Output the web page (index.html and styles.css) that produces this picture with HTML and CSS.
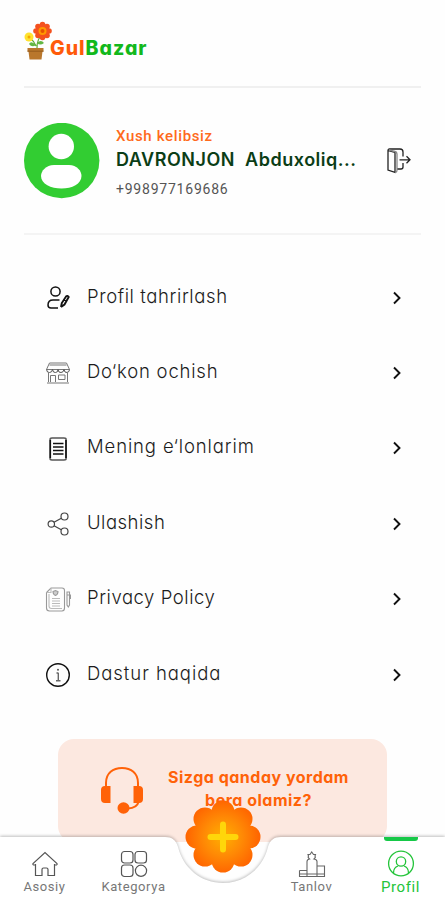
FILE: index.html
```html
<!DOCTYPE html>
<html lang="uz">

<head>
    <meta charset="UTF-8">
    <meta name="viewport" content="width=device-width, initial-scale=1.0">
    <title>GulBazar - Profil</title>
    <link rel="stylesheet" href="styles.css">
</head>

<body>

    <!-- Logo -->
    <header class="header">
        <svg class="logo-icon" width="30" height="40" viewBox="0 0 30 40">
            <path d="M13 27 C13 20 15 17 18 13 M12 25 Q10 20 6 17" fill="none" stroke="#5faa35" stroke-width="1.2" />
            <path d="M13 22 Q17 18 20 22 Q16 25 13 22 M12 24 Q7 19 5 23 Q8 27 12 24" fill="#62b743" />
            <g fill="#f4511e">
                <circle cx="18.500" cy="3.500" r="2.800" /><circle cx="23" cy="5.500" r="2.800" />
                <circle cx="25" cy="10" r="2.800" /><circle cx="23" cy="14.500" r="2.800" />
                <circle cx="18.500" cy="16.500" r="2.800" /><circle cx="14" cy="14.500" r="2.800" />
                <circle cx="12" cy="10" r="2.800" /><circle cx="14" cy="5.500" r="2.800" />
                <circle cx="18.500" cy="10" r="7" />
            </g>
            <circle cx="18.500" cy="10" r="4" fill="#ff9800" />
            <circle cx="18.500" cy="10" r="2" fill="#e65100" />
            <circle cx="5" cy="16" r="4.500" fill="#ffe22e" />
            <circle cx="5" cy="16" r="1.500" fill="#f5a800" />
            <path d="M3.500 27 H19.500 V30.500 H18.500 L17.500 38.500 H5.500 L4.500 30.500 H3.500 Z" fill="#b9772c" />
            <path d="M3.500 30.200 H19.500" stroke="#965a1c" />
        </svg>
        <span class="logo-text"><span class="logo-gul">Gul</span>Bazar</span>
    </header>

    <!-- User -->
    <section class="user">
        <svg class="avatar" width="76" height="76" viewBox="0 0 76 76">
            <circle cx="37.700" cy="37.500" r="37.700" fill="#32cd32" />
            <circle cx="37.300" cy="23.500" r="12.700" fill="#fff" />
            <path d="M30 42 H45 C53 42 57.500 48 57.500 53 C57.500 61 48 65.500 37.500 65.500 C27 65.500 17 61 17 53 C17 48 22 42 30 42 Z" fill="#fff" />
        </svg>
        <div class="user-info">
            <div class="welcome">Xush kelibsiz</div>
            <div class="name">DAVRONJON&nbsp; Abduxoliq...</div>
            <div class="phone">+998977169686</div>
        </div>
        <svg class="logout" width="24" height="26" viewBox="0 0 24 26" fill="none" stroke="#222" stroke-width="1.300">
            <path d="M1 2.500 V22 L8 24.300 V4.500 L1 2.500 Q1 1 2.500 1 H13 Q16 1 16 4 V8.500 M16 15 V19 Q16 21 14 21 H10" />
            <path d="M2 2 L8 3.500 Q10 4 10 6 V22 Q10 24.500 8 24.300" stroke="#888" />
            <path d="M12.500 11.800 H23 M19.500 8.300 L23 11.800 L19.500 15.300" />
        </svg>
    </section>

    <!-- Menu -->
    <main class="menu">
        <a class="menu-item">
            <svg width="26" height="26" viewBox="0 0 26 26" fill="none" stroke="#111" stroke-width="1.500">
                <circle cx="10.500" cy="6.500" r="4.600" />
                <path d="M13 23 H6 Q3 23 3 20 Q3 15 8 15 H14.500" />
                <path d="M16 22 L16.800 18 L21 11.500 Q22.500 10 23.700 12 L19.500 19.500 L16 22 M19.500 14.500 L21.800 16" stroke-width="1.900" />
            </svg>
            <span class="t1">Profil tahrirlash</span>
            <svg class="chevron" width="8" height="14" viewBox="0 0 8 14"><path d="M1 1.500 L6.500 7 L1 12.500" /></svg>
        </a>
        <a class="menu-item">
            <svg width="26" height="26" viewBox="0 0 26 26" fill="none" stroke="#777" stroke-width="1">
                <path d="M4.500 3 H21.500 L24.500 9.500 H1.500 Z M4.500 5 H21.500" />
                <path d="M1.500 9.500 Q2 13 4.500 12.500 Q7 12.500 7.500 9.500 Q8 13 10.500 12.500 Q13 12.500 13 9.500 Q13.500 13 16 12.500 Q18.500 12.500 19 9.500 Q19.500 13 22 12.500 Q24.500 12 24.500 9.500" stroke="#555" />
                <path d="M3.500 13 V22 M22.500 13 V22 M2 23 H24 M5.500 22 V15.500 H10.500 V22 M13.500 15 H20 V19.500 H13.500 Z" />
            </svg>
            <span class="t2">Do‘kon ochish</span>
            <svg class="chevron" width="8" height="14" viewBox="0 0 8 14"><path d="M1 1.500 L6.500 7 L1 12.500" /></svg>
        </a>
        <a class="menu-item">
            <svg width="26" height="26" viewBox="0 0 26 26" fill="none" stroke="#111" stroke-width="1.400">
                <path d="M5.200 4.500 V23.500 M21 4.500 V23.500" stroke-width="1.800" />
                <path d="M5 4.500 Q5 3 7 3 H19 Q21.200 3 21.200 4.500 M5 23.500 Q5 25 7 25 H19 Q21.200 25 21.200 23.500" stroke="#555" />
                <path d="M8 8.500 H18.500 M8 12 H18.500 M8 15.500 H18.500 M8 19 H18.500" />
            </svg>
            <span class="t3">Mening e‘lonlarim</span>
            <svg class="chevron" width="8" height="14" viewBox="0 0 8 14"><path d="M1 1.500 L6.500 7 L1 12.500" /></svg>
        </a>
        <a class="menu-item">
            <svg width="26" height="26" viewBox="0 0 26 26" fill="none" stroke="#444" stroke-width="1.200">
                <circle cx="6.300" cy="13" r="3.200" />
                <circle cx="19.500" cy="5.500" r="3.500" />
                <circle cx="19.500" cy="20.500" r="3.500" />
                <path d="M9 11.300 L16.300 7.200 M9 14.700 L16.300 18.800" />
            </svg>
            <span class="t4">Ulashish</span>
            <svg class="chevron" width="8" height="14" viewBox="0 0 8 14"><path d="M1 1.500 L6.500 7 L1 12.500" /></svg>
        </a>
        <a class="menu-item">
            <svg width="26" height="26" viewBox="0 0 26 26" fill="none" stroke="#999" stroke-width="1.100">
                <path d="M6 2 H17 Q19.500 2 19.500 4.500 V22 Q19.500 25 17 25 H4.500 Q1.500 25 1.500 22 V6.500 Z" />
                <path d="M6 2 V6.500 H1.500 M4 8 V20 Q4 22.500 6.500 22.500 H17" stroke="#bbb" />
                <path d="M8 5.500 L10.500 4.500 L13 5.500 Q13 8.500 10.500 9.500 Q8 8.500 8 5.500 Z" fill="#ccc" />
                <path d="M7 12.500 H15 M7 15 H15 M7 17.500 H15 M7 20 H15" stroke="#bbb" />
                <path d="M22 6 V19 L23.300 21 L24.500 19 V6 Z M22 9 H25.500 V13" />
            </svg>
            <span class="t5">Privacy Policy</span>
            <svg class="chevron" width="8" height="14" viewBox="0 0 8 14"><path d="M1 1.500 L6.500 7 L1 12.500" /></svg>
        </a>
        <a class="menu-item">
            <svg width="26" height="26" viewBox="0 0 26 26" fill="none" stroke="#111" stroke-width="1.400">
                <circle cx="13" cy="13" r="11.300" />
                <path d="M13.300 11 V18.700 M11.500 11 H13.500 M11 18.700 H15.500" stroke="#666" />
                <circle cx="13" cy="7.800" r="1" fill="#555" stroke="none" />
            </svg>
            <span class="t6">Dastur haqida</span>
            <svg class="chevron" width="8" height="14" viewBox="0 0 8 14"><path d="M1 1.500 L6.500 7 L1 12.500" /></svg>
        </a>
    </main>

    <!-- Support card -->
    <section class="support">
        <svg width="44" height="48" viewBox="0 0 44 48" fill="#ff6208">
            <path d="M6 22 V17 C6 7 13 2 22 2 C31 2 38 7 38 17 V22" fill="none" stroke="#ff6208" stroke-width="2" />
            <path d="M10.500 20 V37 H5 Q1 37 1 33 V24 Q1 20 5 20 Z M33.500 20 V37 H39 Q43 37 43 33 V24 Q43 20 39 20 Z" />
            <path d="M38.500 36 Q37 42 28 42.500" fill="none" stroke="#ff6208" stroke-width="2" />
            <ellipse cx="23.500" cy="42" rx="6" ry="5.700" />
        </svg>
        <p class="support-text">Sizga qanday yordam<br>bera olamiz?</p>
    </section>

    <!-- Bottom navigation -->
    <nav class="navbar">
        <svg class="navbar-bg" width="445" height="70" viewBox="0 0 445 70">
            <path d="M-5 7 H165 C172 7 176 10 178 17 C183 38 201 53 223 53 C245 53 263 38 268 17 C270 10 274 7 281 7 H450 V75 H-5 Z" fill="#fff" />
        </svg>
        <a class="nav-item">
            <svg width="28" height="28" viewBox="0 0 28 28" fill="none" stroke="#555" stroke-width="1.200">
                <path d="M4.500 14 V25.500 H11 V19.500 Q11 18 12.500 18 H15.500 Q17 18 17 19.500 V25.500 H23.500 V14 M4.500 15 H2.500 Q1.500 14.500 2 13.500 L14 2.500 L26 13.500 Q26.500 14.500 25.500 15 H23.500" />
            </svg>
            <span>Asosiy</span>
        </a>
        <a class="nav-item">
            <svg width="28" height="28" viewBox="0 0 28 28" fill="none" stroke="#555" stroke-width="1.200">
                <rect x="1.500" y="1.500" width="11.500" height="11.500" rx="3" />
                <rect x="15" y="1.500" width="11.500" height="11.500" rx="3" />
                <rect x="1.500" y="15" width="11.500" height="11.500" rx="3" />
                <circle cx="21" cy="20.800" r="5.600" />
            </svg>
            <span>Kategorya</span>
        </a>
        <a class="nav-add">
            <svg width="78" height="76" viewBox="0 0 78 76">
                <defs>
                    <radialGradient id="petal" gradientUnits="userSpaceOnUse" cx="39" cy="38" r="38">
                        <stop offset="0" stop-color="#ffb000" />
                        <stop offset="0.500" stop-color="#ff8a05" />
                        <stop offset="1" stop-color="#ff6200" />
                    </radialGradient>
                </defs>
                <g fill="url(#petal)">
                    <circle cx="39" cy="38" r="26" />
                    <circle cx="39" cy="13" r="11.500" /><circle cx="57" cy="20" r="11.500" />
                    <circle cx="65" cy="38" r="11.500" /><circle cx="57" cy="56" r="11.500" />
                    <circle cx="39" cy="62" r="11.500" /><circle cx="21" cy="56" r="11.500" />
                    <circle cx="13" cy="38" r="11.500" /><circle cx="21" cy="20" r="11.500" />
                </g>
                <path d="M39 25.500 V50.500 M26.500 38 H51.500" stroke="#ffd60a" stroke-width="6" stroke-linecap="round" />
            </svg>
        </a>
        <a class="nav-item">
            <svg width="28" height="28" viewBox="0 0 28 28" fill="none" stroke="#666" stroke-width="1.100">
                <path d="M1.500 20.500 H9 M1.500 20.500 V26.500 H26.500 V16 H19 M1.500 24 H26.500 M9 26 V11.500 Q9 9.500 11.500 9 Q9.500 7.500 10.500 6 L10 4.500 L12 4.500 L13.700 2 L15.500 4.500 L17.500 4.500 L17 6 Q18 7.500 16 9 Q19 9.500 19 11.500 V26" />
            </svg>
            <span>Tanlov</span>
        </a>
        <a class="nav-item active">
            <svg width="28" height="28" viewBox="0 0 28 28" fill="none" stroke="#24c43a" stroke-width="1.300">
                <circle cx="14" cy="13.500" r="12.400" />
                <circle cx="14" cy="11.500" r="4.700" />
                <path d="M6.500 23 Q6.500 17.500 11 16 M17 16 Q21.500 17.500 21.500 23" />
            </svg>
            <span>Profil</span>
        </a>
    </nav>

</body>

</html>
```
FILE: styles.css
```css
/* General Styling */
body {
    font-family: Inter, "Liberation Sans", sans-serif;
    font-feature-settings: "cv11";
    background-color: #fefefe;
    margin: 0;
    height: 900px;
    overflow: hidden;
    position: relative;
}

svg {
    display: block;
    flex: none;
}

/* Header */
.header {
    margin: 0 24px;
    height: 66px;
    padding-top: 20px;
    border-bottom: 2px solid #f0f0f0;
    display: flex;
    align-items: flex-start;
}

.logo-icon {
    margin-top: 1px;
}

.logo-text {
    margin: 16px 0 0 -4px;
    font-size: 19.5px;
    line-height: 24px;
    font-weight: 800;
    letter-spacing: 1px;
    color: #12b81c;
}

.logo-gul {
    color: #ff5a0a;
}

/* User */
.user {
    margin: 0 24px;
    height: 145px;
    border-bottom: 2px solid #f4f4f4;
    display: flex;
    align-items: center;
}

.user-info {
    flex: 1;
    margin-left: 16px;
    padding-top: 5px;
    white-space: nowrap;
}

.welcome {
    font-family: Roboto, sans-serif;
    font-size: 15px;
    line-height: 22px;
    font-weight: 500;
    letter-spacing: 0.65px;
    color: #ff6a1c;
}

.name {
    font-size: 18px;
    line-height: 26px;
    font-weight: 600;
    letter-spacing: 0.52px;
    color: #0b3d16;
}

.phone {
    margin-top: 4px;
    font-family: Roboto, sans-serif;
    font-size: 14px;
    line-height: 24px;
    letter-spacing: 0.78px;
    color: #555;
}

.logout {
    margin-right: 10px;
}

/* Menu */
.menu {
    padding: 25px 44px 0 45px;
}

.menu-item {
    height: 75.4px;
    display: flex;
    align-items: center;
    font-size: 18.5px;
    font-weight: 300;
    color: #1c1c1c;
}

.menu-item span {
    flex: 1;
    margin: -4px 0 0 16px;
    white-space: nowrap;
}

.menu-item .t1 {
    letter-spacing: 0.6px;
}

.menu-item .t2 {
    letter-spacing: 0.8px;
}

.menu-item .t3 {
    letter-spacing: 0.88px;
}

.menu-item .t4 {
    letter-spacing: 0.5px;
}

.menu-item .t5 {
    letter-spacing: 0.55px;
}

.menu-item .t6 {
    letter-spacing: 0.95px;
}

.chevron {
    fill: none;
    stroke: #111;
    stroke-width: 1.9;
}

/* Support card */
.support {
    box-sizing: border-box;
    width: 329px;
    height: 103px;
    margin: 27px 0 0 58px;
    padding: 27px 37px 0 42px;
    background-color: #fce8e0;
    border-radius: 16px;
    display: flex;
}

.support-text {
    flex: 1;
    margin: 0 0 0 23px;
    text-align: center;
    font-size: 16px;
    line-height: 23px;
    font-weight: 700;
    letter-spacing: 0.5px;
    color: #ff6208;
    white-space: nowrap;
}

/* Bottom navigation */
.navbar {
    position: absolute;
    left: 0;
    bottom: 0;
    width: 445px;
    height: 63px;
    display: flex;
}

.navbar-bg {
    position: absolute;
    left: 0;
    bottom: 0;
    filter: drop-shadow(0 -1px 1.5px rgba(0, 0, 0, 0.25));
}

.nav-item {
    position: relative;
    width: 89px;
    padding-top: 13px;
    display: flex;
    flex-direction: column;
    align-items: center;
    font-family: Roboto, sans-serif;
    font-size: 13px;
    line-height: 18px;
    letter-spacing: 0.6px;
    color: #777;
}

.nav-add {
    position: relative;
    width: 89px;
    margin-top: -38px;
    display: flex;
    justify-content: center;
}

.active {
    color: #24c43a;
    font-size: 15px;
    font-weight: 400;
}

.active::before {
    content: "";
    position: absolute;
    top: 0;
    width: 34px;
    height: 4px;
    background-color: #16c848;
    border-radius: 0 0 3px 3px;
}
```
